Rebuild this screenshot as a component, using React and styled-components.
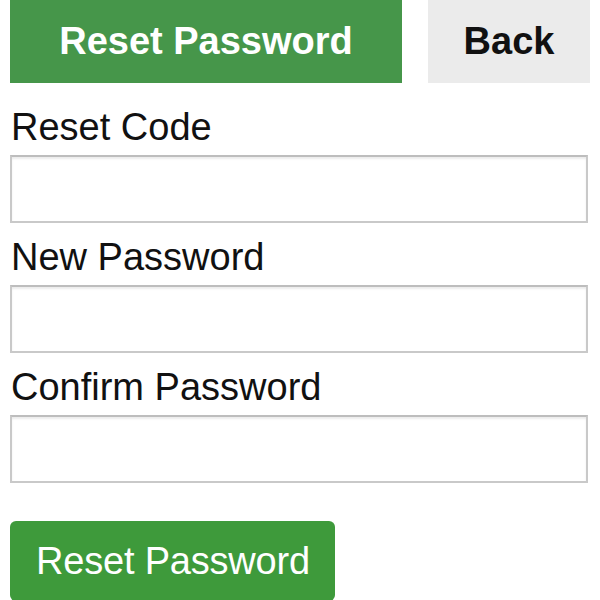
import React from 'react'
import styled, { createGlobalStyle } from 'styled-components'

const GlobalStyle = createGlobalStyle`
  html, body {
    margin: 0;
    padding: 0;
    background: #fff;
  }
  body {
    font-family: "Liberation Sans", Arial, sans-serif;
    color: #111;
  }
`

const Page = styled.div`
  padding: 0 12px 0 10px;
  width: 600px;
  box-sizing: border-box;
`

const Tabs = styled.div`
  display: flex;
  align-items: stretch;
  height: 83px;
  margin-right: -2px;
`

const Tab = styled.button`
  border: none;
  margin: 0;
  padding: 0;
  font-family: inherit;
  font-size: 38px;
  font-weight: bold;
  line-height: 83px;
  text-align: center;
  cursor: pointer;
  width: ${(p) => p.width}px;
  margin-left: ${(p) => p.offset || 0}px;
  background: ${(p) => (p.active ? '#46964a' : '#ebebeb')};
  color: ${(p) => (p.active ? '#fff' : '#111')};
`

const Form = styled.form`
  display: flex;
  flex-direction: column;
  gap: 13px;
  padding-top: 23px;
`

const Field = styled.div`
  display: flex;
  flex-direction: column;
  gap: 7px;
`

const Label = styled.label`
  font-size: 38px;
  line-height: 42px;
  height: 42px;
  color: #111;
  padding-left: 1px;
`

const Input = styled.input`
  box-sizing: border-box;
  height: 68px;
  width: 100%;
  margin: 0;
  border: 2px solid #c9c9c9;
  border-top-color: #bdbdbd;
  box-shadow: inset 0 2px 2px rgba(0, 0, 0, 0.08);
  background: #fff;
  font-family: inherit;
  font-size: 30px;
  padding: 0 12px;
  outline: none;
`

const Submit = styled.button`
  align-self: flex-start;
  margin-top: 25px;
  height: 80px;
  padding: 0 25px 0 26px;
  border: none;
  border-radius: 6px;
  background: #3e9a3b;
  color: #fff;
  font-family: inherit;
  font-size: 38px;
  letter-spacing: -0.2px;
  cursor: pointer;
`

function App() {
  const [code, setCode] = React.useState('')
  const [password, setPassword] = React.useState('')
  const [confirm, setConfirm] = React.useState('')

  const fields = [
    { id: 'code', label: 'Reset Code', type: 'text', value: code, set: setCode },
    { id: 'password', label: 'New Password', type: 'password', value: password, set: setPassword },
    { id: 'confirm', label: 'Confirm Password', type: 'password', value: confirm, set: setConfirm },
  ]

  return (
    <>
      <GlobalStyle />
      <Page>
        <Tabs>
          <Tab active width={392}>Reset Password</Tab>
          <Tab width={162} offset={26}>Back</Tab>
        </Tabs>
        <Form onSubmit={(e) => e.preventDefault()}>
          {fields.map((f) => (
            <Field key={f.id}>
              <Label htmlFor={f.id}>{f.label}</Label>
              <Input id={f.id} type={f.type} value={f.value} onChange={(e) => f.set(e.target.value)} />
            </Field>
          ))}
          <Submit type="submit">Reset Password</Submit>
        </Form>
      </Page>
    </>
  )
}

export default App
